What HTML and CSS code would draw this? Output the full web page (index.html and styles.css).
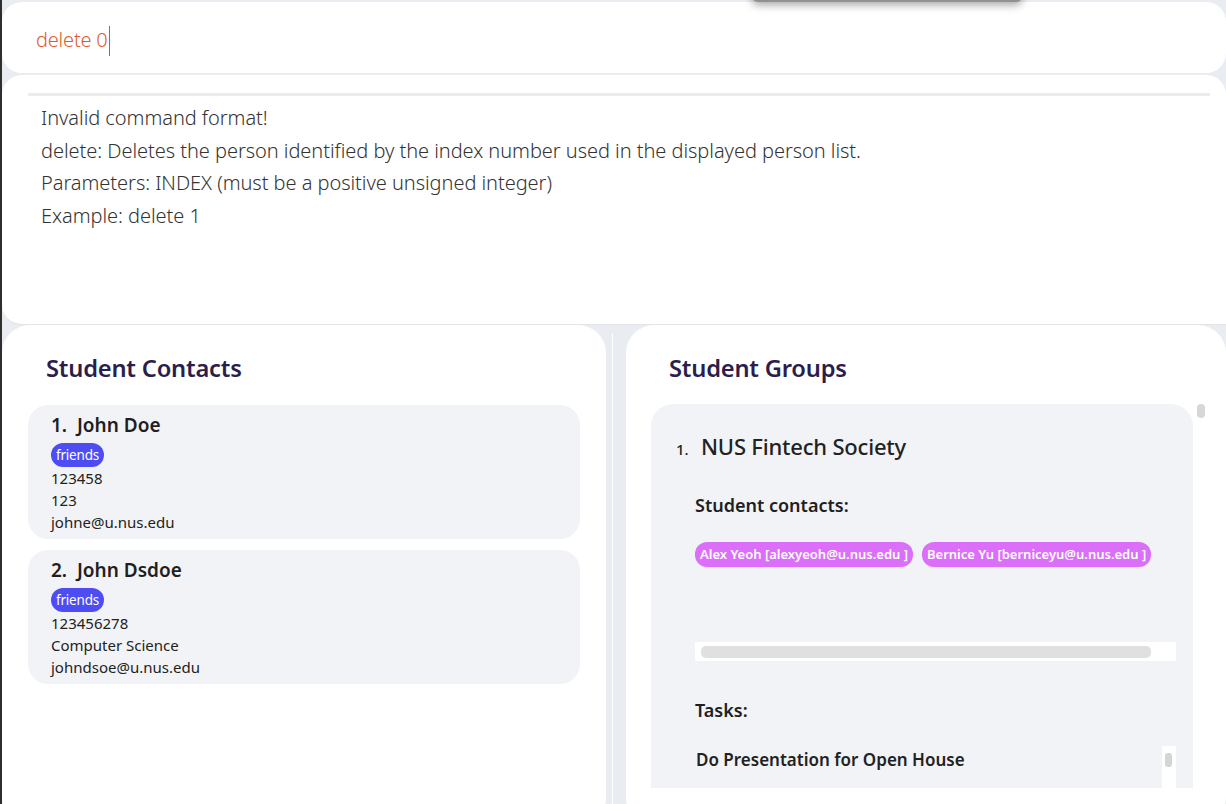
FILE: index.html
```html
<!DOCTYPE html>
<html>
<head>
<meta charset="utf-8">
<link rel="stylesheet" href="styles.css">
</head>
<body>
<div class="window">
  <div class="popup-shadow"></div>
  <div class="command-box">
    <span class="command-text">delete 0</span><span class="caret"></span>
  </div>
  <div class="result-box">
    <div class="result-area">
      <p>Invalid command format!</p>
      <p>delete: Deletes the person identified by the index number used in the displayed person list.</p>
      <p>Parameters: INDEX (must be a positive unsigned integer)</p>
      <p>Example: delete 1</p>
    </div>
  </div>
  <div class="panels">
    <section class="panel panel-left">
      <h2 class="panel-title">Student Contacts</h2>
      <div class="card">
        <div class="card-name">1.&nbsp; John Doe</div>
        <div class="tags"><span class="tag">friends</span></div>
        <div class="field">123458</div>
        <div class="field">123</div>
        <div class="field">johne@u.nus.edu</div>
      </div>
      <div class="card">
        <div class="card-name">2.&nbsp; John Dsdoe</div>
        <div class="tags"><span class="tag">friends</span></div>
        <div class="field">123456278</div>
        <div class="field">Computer Science</div>
        <div class="field">johndsoe@u.nus.edu</div>
      </div>
    </section>
    <div class="divider"><div class="divider-line"></div></div>
    <section class="panel panel-right">
      <h2 class="panel-title">Student Groups</h2>
      <div class="group-scroll">
        <div class="group-card">
          <div class="group-head"><span class="group-index">1.</span><span class="group-name">NUS Fintech Society</span></div>
          <div class="sub-title sub-contacts">Student contacts:</div>
          <div class="pills">
            <span class="pill">Alex Yeoh [alexyeoh@u.nus.edu ]</span>
            <span class="pill">Bernice Yu [berniceyu@u.nus.edu ]</span>
          </div>
          <div class="hscroll"><div class="hscroll-thumb"></div></div>
          <div class="sub-title sub-tasks">Tasks:</div>
          <div class="task-list">
            <div class="task">Do Presentation for Open House</div>
            <div class="vscroll"><div class="vscroll-thumb"></div></div>
          </div>
        </div>
        <div class="group-scrollbar"><div class="group-thumb"></div></div>
      </div>
    </section>
  </div>
</div>
</body>
</html>
```

FILE: styles.css
```css
* { box-sizing: border-box; }
html, body {
  margin: 0;
  padding: 0;
  height: 100%;
  overflow: hidden;
}
body {
  background: #e9edf1;
  font-family: "Noto Sans", "Open Sans", sans-serif;
}
.window {
  position: relative;
  height: 804px;
  border-left: 2px solid #2e2e2e;
  display: flex;
  flex-direction: column;
  padding-top: 2px;
}
.popup-shadow {
  position: absolute;
  left: 750px;
  top: -14px;
  width: 270px;
  height: 16px;
  background: #8f9194;
  border-radius: 6px;
  box-shadow: 0 3px 8px rgba(0,0,0,0.35);
  z-index: 5;
}
.command-box {
  height: 71px;
  background: #fff;
  border-radius: 20px;
  display: flex;
  align-items: center;
  padding-left: 34px;
  padding-top: 4px;
  flex-shrink: 0;
}
.command-text {
  font-family: "Noto Sans", sans-serif;
  font-weight: 300;
  font-size: 20px;
  color: #e2592c;
  letter-spacing: -0.2px;
}
.caret {
  display: inline-block;
  width: 1px;
  height: 30px;
  background: #d9502a;
  margin-left: 1px;
  margin-top: 2px;
}
.result-box {
  margin-top: 2px;
  height: 250px;
  background: #fff;
  border-radius: 20px 20px 0 20px;
  padding: 18px 16px 0 26px;
  flex-shrink: 0;
  border-bottom: 1px solid #e2e4e6;
}
.result-area {
  border-top: 3px solid #ececec;
  padding: 6px 0 0 13px;
}
.result-area p {
  margin: 0;
  font-size: 20px;
  font-weight: 300;
  line-height: 32.7px;
  color: #333;
  letter-spacing: -0.05px;
}
.panels {
  flex: 1;
  display: flex;
  min-height: 0;
}
.panel {
  background: #fff;
  border-radius: 28px;
  height: 500px;
}
.panel-left {
  width: 604px;
  padding: 26px 26px 0 26px;
}
.panel-right {
  flex: 1;
  padding: 26px 20px 0 25px;
}
.divider {
  width: 20px;
  display: flex;
  padding-left: 6px;
}
.divider-line {
  width: 1px;
  background: #fff;
  margin-top: 8px;
}
.panel-title {
  margin: 0 0 20px 18px;
  font-size: 23.7px;
  font-weight: 600;
  color: #2c1e4c;
  line-height: 34px;
  letter-spacing: -0.2px;
}
.card {
  background: #f2f3f7;
  border-radius: 20px;
  padding: 8px 23px 6px;
  margin-bottom: 11px;
}
.card-name {
  font-size: 19px;
  font-weight: 600;
  color: #1f1f1f;
  line-height: 24px;
  margin-bottom: 5px;
}
.tags { display: flex; height: 25px; align-items: center; }
.tag {
  background: #4d4df3;
  color: #fff;
  font-size: 13.5px;
  line-height: 24px;
  padding: 0 5px;
  border-radius: 12px;
  letter-spacing: -0.2px;
}
.field {
  font-size: 15px;
  line-height: 22px;
  color: #222;
}
.group-scroll {
  display: flex;
  height: 384px;
  overflow: hidden;
  margin-top: -1px;
}
.group-card {
  width: 542px;
  background: #f2f3f7;
  border-radius: 22px 22px 0 0;
  padding: 28px 17px 0 25px;
  height: 384px;
}
.group-scrollbar {
  width: 12px;
  padding-left: 4px;
}
.group-thumb {
  width: 8px;
  height: 14px;
  background: #d7d7d7;
  border-radius: 4px;
}
.group-head {
  display: flex;
  align-items: baseline;
  line-height: 28px;
}
.group-index {
  font-size: 15px;
  font-weight: 500;
  color: #222;
  width: 25px;
}
.group-name {
  font-size: 22px;
  font-weight: 500;
  color: #222;
  letter-spacing: -0.2px;
}
.sub-title {
  font-size: 18px;
  font-weight: 600;
  color: #1f1f1f;
  line-height: 24px;
  padding-left: 19px;
}
.sub-contacts { margin-top: 30px; }
.pills {
  display: flex;
  gap: 9px;
  padding-left: 19px;
  margin-top: 25px;
}
.pill {
  background: #db6ff9;
  color: #fff;
  font-size: 13px;
  font-weight: 600;
  line-height: 25px;
  padding: 0 5px;
  border-radius: 12px;
}
.hscroll {
  margin: 75px 0 0 19px;
  width: 481px;
  height: 19px;
  background: #fff;
  padding: 4px 25px 3px 6px;
}
.hscroll-thumb {
  height: 12px;
  background: #e0e0e0;
  border-radius: 5px;
}
.sub-tasks { margin-top: 37px; }
.task-list {
  margin: 24px 0 0 19px;
  width: 481px;
  display: flex;
  justify-content: space-between;
}
.task {
  font-size: 17px;
  font-weight: 600;
  color: #222;
  line-height: 24px;
  padding-top: 2px;
  padding-left: 1px;
}
.vscroll {
  width: 14px;
  height: 60px;
  background: #fff;
  padding: 7px 3px 0 3px;
}
.vscroll-thumb {
  width: 7px;
  height: 14px;
  background: #d5d5d5;
  border-radius: 3px;
}
```
